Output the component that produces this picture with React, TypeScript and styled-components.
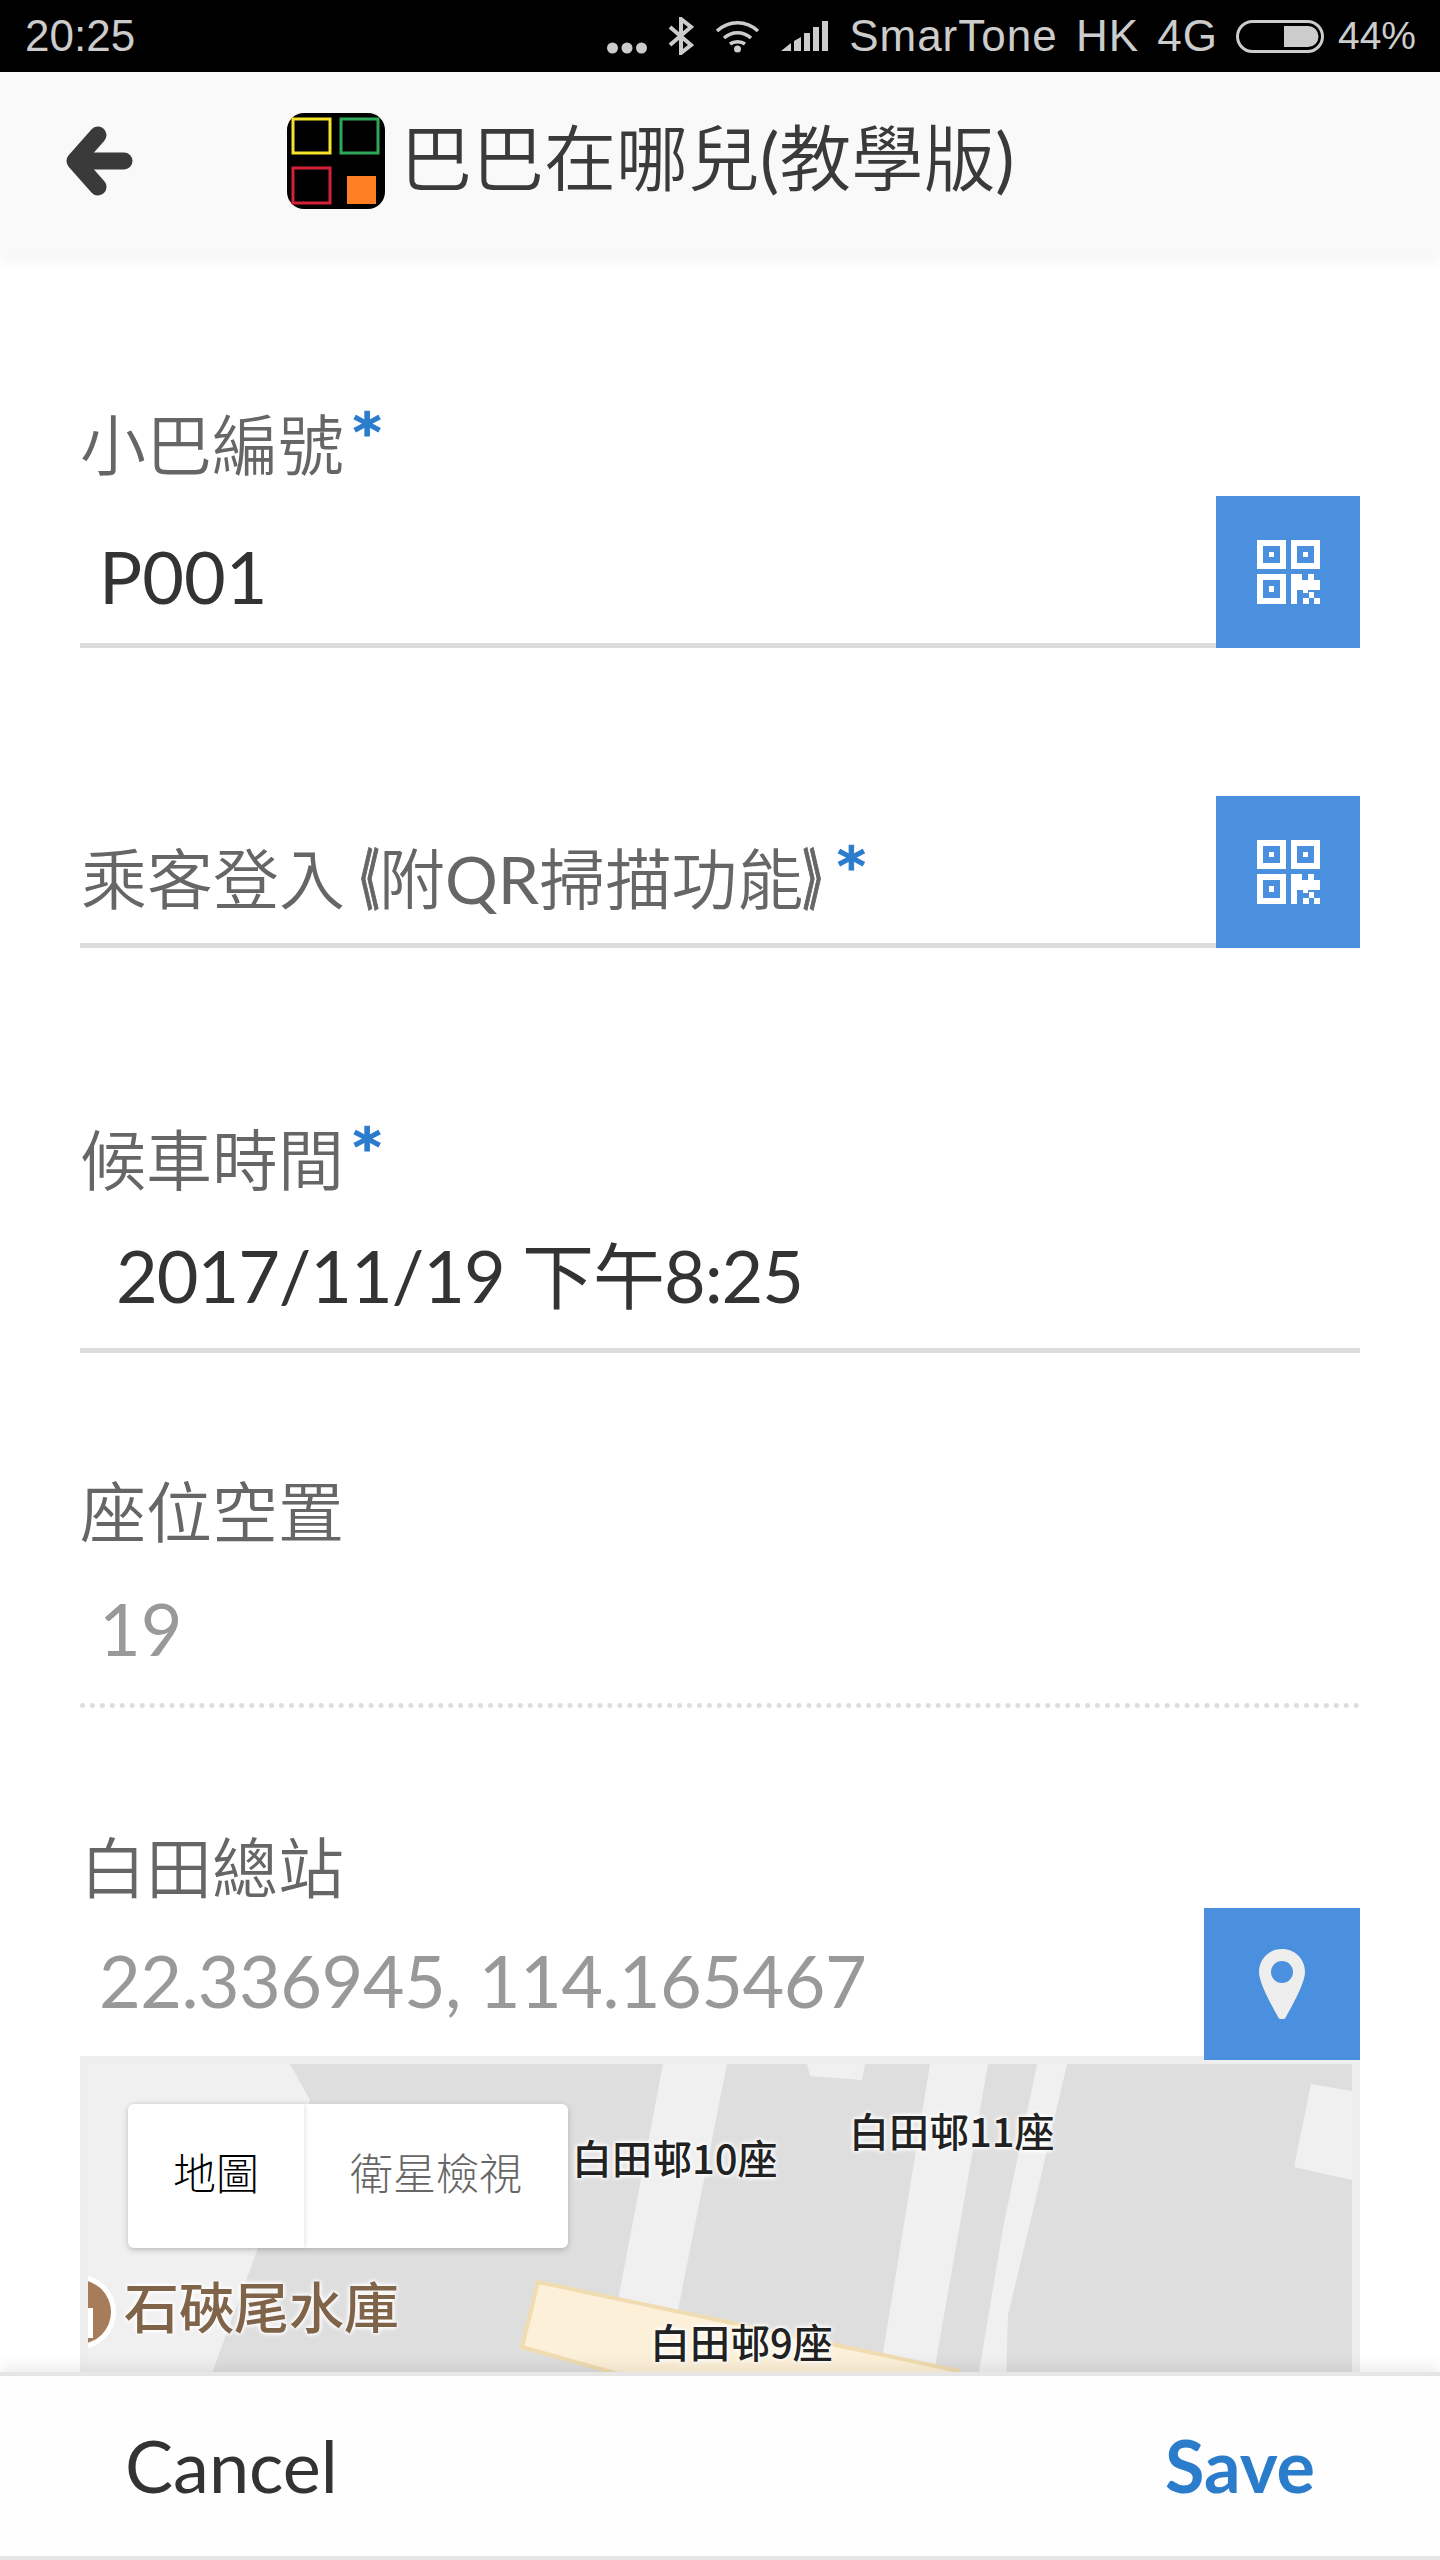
import styled, { createGlobalStyle } from 'styled-components';

const CJK = `Lato, "Noto Sans CJK TC", sans-serif`;

function QrIcon() {
  return (
    <svg width="63" height="64" viewBox="0 0 63 64" fill="#fff">
      <path fillRule="evenodd" d="M0 0h29v29H0zM6 6v17h17V6zM12 12h5v5h-5z" />
      <path fillRule="evenodd" d="M34 0h29v29H34zM40 6v17h17V6zM46 12h5v5h-5z" />
      <path fillRule="evenodd" d="M0 34h29v30H0zM6 40v18h17V40zM12 46h5v6h-5z" />
      <path d="M34 34h11v6h6v-6h6v6h6v10H40v14h-6z" />
      <path d="M46 50h5v3h-5zM52 52h5v6h-5zM46 58h6v6h-6zM57 58h6v6h-6z" />
    </svg>
  );
}

function PinIcon() {
  return (
    <svg width="46" height="70" viewBox="0 0 46 70">
      <path
        fillRule="evenodd"
        fill="#eee"
        d="M23 0C10 0 0 10 0 23c0 11 13 34 19 45a4.5 4.5 0 0 0 8 0c6-11 19-34 19-45C46 10 36 0 23 0zM23 12a11 11 0 1 1 0 22 11 11 0 0 1 0-22z"
      />
    </svg>
  );
}

function BackArrow() {
  return (
    <svg width="67" height="70" viewBox="0 0 67 70" fill="none" stroke="#3a3a3a" strokeWidth="17" strokeLinejoin="round" strokeLinecap="round">
      <path d="M32 9L9 35l23 26" />
      <path d="M12 35h46" />
    </svg>
  );
}

function AppLogo() {
  return (
    <svg width="98" height="96" viewBox="0 0 98 96">
      <rect width="98" height="96" rx="17" fill="#000" />
      <rect x="6" y="6" width="37" height="34" fill="none" stroke="#f5e22a" strokeWidth="3" />
      <rect x="54" y="6" width="37" height="34" fill="none" stroke="#2fa75a" strokeWidth="3" />
      <rect x="6" y="55" width="37" height="35" fill="none" stroke="#d5203a" strokeWidth="3" />
      <rect x="60" y="63" width="29" height="28" fill="#ff8022" />
    </svg>
  );
}

function StatusIcons() {
  return (
    <>
      <svg width="40" height="38" viewBox="0 0 40 38" fill="#ccc">
        <circle cx="5.500" cy="31" r="5.500" />
        <circle cx="20" cy="31" r="5.500" />
        <circle cx="34.500" cy="31" r="5.500" />
      </svg>
      <svg width="26" height="38" viewBox="0 0 26 38" fill="none" stroke="#ccc" strokeWidth="4">
        <path d="M2 10l21 18-10 8V2l10 8L2 28" />
      </svg>
      <svg width="45" height="33" viewBox="0 0 45 33" fill="none" stroke="#ccc" strokeWidth="3.600">
        <path d="M2 11c12-11 29-11 41 0" />
        <path d="M9 18c8-7 19-7 27 0" />
        <path d="M15 24c4-3 11-3 15 0" />
        <circle cx="22.500" cy="29" r="3.500" fill="#ccc" stroke="none" />
      </svg>
      <svg width="47" height="30" viewBox="0 0 47 30" fill="#ccc">
        <path d="M0 30l10-8v8zM13 20l7-4v14h-7zM23 12h6v18h-6zM32 6h6v24h-6zM41 0h6v30h-6z" />
      </svg>
    </>
  );
}

function BatteryIcon() {
  return (
    <svg width="88" height="33" viewBox="0 0 88 33">
      <rect x="1.500" y="1.500" width="85" height="30" rx="15" fill="none" stroke="#ccc" strokeWidth="3" />
      <path d="M48 6h24a10.500 10.500 0 0 1 0 21H48z" fill="#ccc" />
    </svg>
  );
}

function MapDrawing() {
  return (
    <MapSvg viewBox="88 2064 1264 320">
      <rect x="88" y="2064" width="1264" height="320" fill="#dedede" />
      <g fill="#f0f0f0">
        <path d="M88 2064H290L310 2100 258 2248 208 2384H88z" />
        <path d="M663 2064H727L678 2310 618 2300z" />
        <path d="M807 2064H865L862 2080 810 2076z" />
        <path d="M930 2064H988L932 2384H878z" />
        <path d="M1037 2064H1067L1035 2202 1008 2315 1006 2384H977L1003 2228z" />
        <path d="M1311 2084L1352 2091V2180L1294 2167z" />
      </g>
      <path d="M538 2282L959 2371V2384H654L522 2347z" fill="#fcf0d8" stroke="#f0dcb0" strokeWidth="4" />
      <circle cx="79" cy="2312" r="37" fill="#fff" />
      <circle cx="79" cy="2312" r="32" fill="#a67c5b" />
      <path d="M88 2308h5v30h-5z" fill="#fff" />
    </MapSvg>
  );
}

function App() {
  return (
    <>
      <GlobalStyle />
      <Screen>
        <StatusBar>
          <TimeText>20:25</TimeText>
          <StatusRight>
            <StatusIcons />
            <Carrier>SmarTone HK 4G</Carrier>
            <BatteryIcon />
            <Percent>44%</Percent>
          </StatusRight>
        </StatusBar>

        <Header>
          <BackArrow />
          <LogoWrap>
            <AppLogo />
          </LogoWrap>
          <Title>
            巴巴在哪兒<Latin>(</Latin>教學版<Latin>)</Latin>
          </Title>
        </Header>

        <Main>
          <Field $top={155}>
            <Label>
              小巴編號<Star>*</Star>
            </Label>
            <InputRow $gap={16} $height={152}>
              <Value $shift={12}>P001</Value>
              <SquareButton $width={144}>
                <QrIcon />
              </SquareButton>
            </InputRow>
          </Field>

          <Field $top={148}>
            <InputRow $gap={0} $height={152}>
              <RowLabel>
                乘客登入<OpenBracket>《</OpenBracket>附<Latin>QR</Latin>掃描功能<CloseBracket>》</CloseBracket>
                <Star>*</Star>
              </RowLabel>
              <SquareButton $width={144}>
                <QrIcon />
              </SquareButton>
            </InputRow>
          </Field>

          <Field $top={177}>
            <Label>
              候車時間<Star>*</Star>
            </Label>
            <InputRow $gap={6} $height={152}>
              <Value $indent={36} $shift={-6} $tracking={-1.05}>
                2017/11/19 下午8:25
              </Value>
            </InputRow>
          </Field>

          <Field $top={124}>
            <Label>座位空置</Label>
            <InputRow $gap={6} $height={155} $dotted>
              <Value $muted>19</Value>
            </InputRow>
          </Field>

          <Field $top={125}>
            <Label>白田總站</Label>
            <LocationRow>
              <Value $muted $shift={-8} $tracking={-0.55}>
                22.336945, 114.165467
              </Value>
              <SquareButton $width={156}>
                <PinIcon />
              </SquareButton>
            </LocationRow>
            <MapFrame>
              <MapInner>
                <MapDrawing />
                <MapLabel $x={484} $y={70}>白田邨10座</MapLabel>
                <MapLabel $x={761} $y={43}>白田邨11座</MapLabel>
                <MapLabel $x={562} $y={254}>白田邨9座</MapLabel>
                <PlaceLabel>石硤尾水庫</PlaceLabel>
                <MapTabs>
                  <MapTab $active $width={176}>地圖</MapTab>
                  <MapTab $width={264}>衛星檢視</MapTab>
                </MapTabs>
              </MapInner>
            </MapFrame>
          </Field>
        </Main>

        <Footer>
          <FooterButton>Cancel</FooterButton>
          <FooterButton $primary>Save</FooterButton>
        </Footer>
      </Screen>
    </>
  );
}

const GlobalStyle = createGlobalStyle`
  * {
    box-sizing: border-box;
  }

  body {
    margin: 0;
    background: #fff;
    font-family: ${CJK};
  }
`;

const Screen = styled.div`
  width: 1440px;
  height: 2560px;
  display: flex;
  flex-direction: column;
  overflow: hidden;
`;

const StatusBar = styled.div`
  height: 72px;
  flex-shrink: 0;
  padding: 0 24px 0 25px;
  display: flex;
  justify-content: space-between;
  align-items: center;
  background: #000;
`;

const StatusRight = styled.div`
  display: flex;
  align-items: center;
  gap: 21px;
`;

const StatusText = styled.span`
  font-family: 'Liberation Sans', sans-serif;
  color: #ccc;
  white-space: nowrap;
`;

const TimeText = styled(StatusText)`
  font-size: 44px;
`;

const Percent = styled(StatusText)`
  margin-left: -7px;
  font-size: 39px;
`;

const Carrier = styled(StatusText)`
  margin-right: -3px;
  font-size: 44px;
  letter-spacing: 1px;
  word-spacing: 5px;
`;

const Header = styled.header`
  height: 183px;
  flex-shrink: 0;
  padding: 0 0 6px 66px;
  display: flex;
  align-items: center;
  position: relative;
  z-index: 2;
  background: #f9f9f9;
  box-shadow: 0 4px 14px rgba(0, 0, 0, 0.05);
`;

const LogoWrap = styled.div`
  margin-left: 154px;
  display: flex;
`;

const Title = styled.h1`
  margin: 0 0 14px 15px;
  font-size: 72px;
  font-weight: 350;
  color: #3a3a3a;
  white-space: nowrap;
`;

const Latin = styled.span`
  font-weight: 400;
`;

const Main = styled.main`
  flex: 1;
  min-height: 0;
  padding: 0 80px;
  overflow: hidden;
`;

const Field = styled.section<{ $top: number }>`
  margin-top: ${(props) => props.$top}px;
`;

const Label = styled.div`
  height: 70px;
  font-size: 66px;
  line-height: 70px;
  font-weight: 350;
  color: #666;
  white-space: nowrap;
`;

const RowLabel = styled(Label)`
  flex: 1;
  height: auto;
  padding: 18px 0 0 1px;
  display: block;
`;

const Bracket = styled.span`
  display: inline-block;
  font-feature-settings: 'halt';
  font-weight: 700;
  -webkit-text-stroke: 1.5px #666;
`;

const OpenBracket = styled(Bracket)`
  margin-left: 1px;
  transform: scaleX(0.55);
  transform-origin: right center;
`;

const CloseBracket = styled(Bracket)`
  margin-right: -8px;
  transform: scaleX(0.55);
  transform-origin: left center;
`;

const Star = styled.span`
  margin-left: 9px;
  position: relative;
  top: -19px;
  font-family: 'DejaVu Sans', sans-serif;
  font-size: 54px;
  line-height: 0;
  font-weight: 700;
  color: #2c7ccc;
  -webkit-text-stroke: 1px #2c7ccc;
`;

const InputRow = styled.div<{ $gap: number; $height: number; $dotted?: boolean }>`
  height: ${(props) => props.$height}px;
  margin-top: ${(props) => props.$gap}px;
  display: flex;
  align-items: center;
  border-bottom: 5px ${(props) => (props.$dotted ? 'dotted' : 'solid')} #ddd;
`;

const LocationRow = styled.div`
  height: 152px;
  margin-top: 5px;
  display: flex;
  align-items: center;
  position: relative;
  z-index: 1;
`;

const Value = styled.div<{ $indent?: number; $shift?: number; $muted?: boolean; $tracking?: number }>`
  flex: 1;
  padding-left: ${(props) => props.$indent ?? 19}px;
  padding-top: ${(props) => Math.max(props.$shift ?? 0, 0)}px;
  padding-bottom: ${(props) => Math.max(-(props.$shift ?? 0), 0)}px;
  font-size: 72px;
  letter-spacing: ${(props) => props.$tracking ?? 0}px;
  color: ${(props) => (props.$muted ? '#999' : '#333')};
  white-space: nowrap;
`;

const SquareButton = styled.button<{ $width: number }>`
  width: ${(props) => props.$width}px;
  height: 152px;
  flex-shrink: 0;
  margin-bottom: ${(props) => (props.$width === 144 ? -5 : 0)}px;
  padding: 0;
  display: flex;
  justify-content: center;
  align-items: center;
  border: none;
  background: #4a90df;
`;

const MapFrame = styled.div`
  height: 340px;
  margin-top: -4px;
  border: 8px solid #eee;
`;

const MapInner = styled.div`
  height: 100%;
  position: relative;
  overflow: hidden;
`;

const MapSvg = styled.svg`
  width: 1264px;
  height: 320px;
  display: block;
`;

const MapLabel = styled.span<{ $x: number; $y: number }>`
  position: absolute;
  left: ${(props) => props.$x}px;
  top: ${(props) => props.$y}px;
  font-family: 'Noto Sans CJK TC', sans-serif;
  font-size: 40px;
  line-height: 46px;
  font-weight: 500;
  color: #222;
  white-space: nowrap;
  text-shadow: 0 0 4px #fff, 0 0 4px #fff, 0 0 6px #fff;
`;

const PlaceLabel = styled.span`
  position: absolute;
  left: 36px;
  top: 213px;
  font-family: 'Noto Sans CJK TC', sans-serif;
  font-size: 55px;
  line-height: 55px;
  font-weight: 500;
  color: #80644a;
  white-space: nowrap;
  text-shadow: 0 0 4px #fff, 0 0 4px #fff, 0 0 6px #fff;
`;

const MapTabs = styled.div`
  position: absolute;
  left: 40px;
  top: 40px;
  height: 144px;
  display: flex;
  border-radius: 6px;
  background: #fff;
  box-shadow: 0 2px 6px rgba(0, 0, 0, 0.2);
`;

const MapTab = styled.div<{ $active?: boolean; $width: number }>`
  width: ${(props) => props.$width}px;
  padding-bottom: 10px;
  display: flex;
  justify-content: center;
  align-items: center;
  font-family: 'Noto Sans CJK TC', sans-serif;
  font-size: 43px;
  font-weight: 300;
  color: ${(props) => (props.$active ? '#000' : '#666')};
  box-shadow: ${(props) => (props.$active ? '2px 0 4px rgba(0, 0, 0, 0.08)' : 'none')};
`;

const Footer = styled.footer`
  height: 188px;
  flex-shrink: 0;
  padding: 0 125px 2px;
  display: flex;
  justify-content: space-between;
  align-items: center;
  position: relative;
  z-index: 2;
  border-top: 4px solid #e6e6e6;
  border-bottom: 4px solid #e6e6e6;
  background: #fefefe;
  box-shadow: 0 -6px 14px rgba(0, 0, 0, 0.07);
`;

const FooterButton = styled.button<{ $primary?: boolean }>`
  padding: 0;
  border: none;
  background: none;
  font-family: Lato, sans-serif;
  font-size: 72px;
  font-weight: ${(props) => (props.$primary ? 700 : 400)};
  color: ${(props) => (props.$primary ? '#2c7ccc' : '#333')};
`;

export default App;
